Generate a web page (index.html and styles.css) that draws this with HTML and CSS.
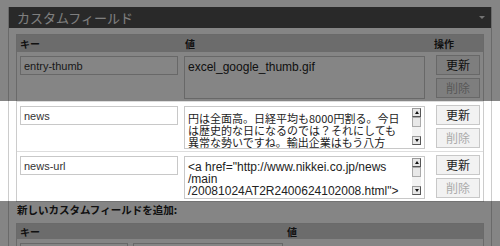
FILE: index.html
```html
<!DOCTYPE html>
<html lang="ja">
<head>
    <meta charset="UTF-8">
    <title>カスタムフィールド</title>
    <link rel="stylesheet" href="styles.css">
</head>
<body>
    <div class="postbox">
        <h3 class="hndle">
            <span>カスタムフィールド</span>
            <span class="toggle"></span>
        </h3>
        <div class="inside">
            <div class="list-table">
                <div class="list-head">
                    <div class="col-key">キー</div>
                    <div class="col-value">値</div>
                    <div class="col-action">操作</div>
                </div>

                <div class="meta-row">
                    <div class="col-key"><input type="text" class="key-input" value="entry-thumb"></div>
                    <div class="col-value">
                        <div class="value-box">
                            <textarea class="value-text" wrap="off">excel_google_thumb.gif</textarea>
                        </div>
                    </div>
                    <div class="col-action">
                        <button class="btn">更新</button>
                        <button class="btn btn-off">削除</button>
                    </div>
                </div>

                <div class="meta-row">
                    <div class="col-key"><input type="text" class="key-input" value="news"></div>
                    <div class="col-value">
                        <div class="value-box">
                            <textarea class="value-text ja" wrap="off">円は全面高。日経平均も8000円割る。今日
は歴史的な日になるのでは？それにしても
異常な勢いですね。輸出企業はもう八方</textarea>
                            <div class="scrollbar">
                                <div class="sb-arrow sb-up"></div>
                                <div class="sb-thumb"></div>
                                <div class="sb-track"></div>
                                <div class="sb-arrow sb-down"></div>
                            </div>
                        </div>
                    </div>
                    <div class="col-action">
                        <button class="btn">更新</button>
                        <button class="btn btn-off">削除</button>
                    </div>
                </div>

                <div class="meta-row">
                    <div class="col-key"><input type="text" class="key-input" value="news-url"></div>
                    <div class="col-value">
                        <div class="value-box">
                            <textarea class="value-text" wrap="off">&lt;a href="http://www.nikkei.co.jp/news
/main
/20081024AT2R2400624102008.html"&gt;</textarea>
                            <div class="scrollbar">
                                <div class="sb-arrow sb-up"></div>
                                <div class="sb-thumb"></div>
                                <div class="sb-track"></div>
                                <div class="sb-arrow sb-down"></div>
                            </div>
                        </div>
                    </div>
                    <div class="col-action">
                        <button class="btn">更新</button>
                        <button class="btn btn-off">削除</button>
                    </div>
                </div>
            </div>

            <p class="add-title">新しいカスタムフィールドを追加:</p>

            <div class="new-table">
                <div class="new-head">
                    <div>キー</div>
                    <div>値</div>
                </div>
                <div class="new-row">
                    <input type="text" class="new-key">
                    <input type="text" class="new-select">
                </div>
            </div>
        </div>
    </div>

    <!-- 強調表示の帯以外を暗くする -->
    <div class="dim dim-top"></div>
    <div class="dim dim-bottom"></div>
</body>
</html>
```

FILE: styles.css
```css
body {
    margin: 0;
    height: 246px;
    background: #fff;
    font-family: "Liberation Sans", "Noto Sans CJK JP", sans-serif;
    color: #333;
    overflow: hidden;
}

.postbox {
    margin: 7px 0 0 8px;
    width: 484px;
    height: 239px;
    box-sizing: border-box;
    border: 1px solid #ccc;
    border-top: 0;
    border-bottom: 0;
    overflow: hidden;
}

.hndle {
    margin: 0 -1px;
    height: 21px;
    background: #4f4f4f;
    color: #f4f4f4;
    font-family: "Noto Sans CJK JP", sans-serif;
    font-size: 13px;
    font-weight: normal;
    line-height: 21px;
    padding: 0 7px 0 9px;
    display: flex;
    align-items: center;
    justify-content: space-between;
}

.toggle {
    width: 0;
    height: 0;
    border-left: 3px solid transparent;
    border-right: 3px solid transparent;
    border-top: 3px solid #ddd;
}

.inside {
    padding: 6px 7px 0 7px;
}

.list-table {
    border: 1px solid #ccc;
    border-bottom: 0;
}

.list-head,
.meta-row {
    display: grid;
    grid-template-columns: 167px 249px 1fr;
}

.list-head {
    height: 17px;
    background: #d0d0d0;
    font-family: "Noto Sans CJK JP", sans-serif;
    font-size: 10px;
    font-weight: bold;
    line-height: 17px;
    color: #222;
}

.list-head .col-key {
    padding-left: 3px;
}

.list-head .col-value,
.list-head .col-action {
    padding-left: 1px;
}

.meta-row {
    height: 50px;
    box-sizing: border-box;
    padding: 4px 0 2px 0;
    border-bottom: 1px solid #ddd;
}

.meta-row .col-key {
    padding-left: 3px;
}

.key-input {
    display: block;
    margin: 0;
    width: 158px;
    height: 19px;
    box-sizing: border-box;
    border: 1px solid #c8c8c8;
    padding: 0 3px;
    font-family: "Liberation Sans", sans-serif;
    font-size: 11px;
    color: #333;
    background: #fff;
}

.value-box {
    display: flex;
    width: 241px;
    height: 43px;
    box-sizing: border-box;
    border: 1px solid #c8c8c8;
    background: #fff;
}

.value-text {
    flex: 1;
    margin: 0;
    border: 0;
    padding: 4px 0 0 3px;
    font-family: "Liberation Sans", sans-serif;
    font-size: 12px;
    line-height: 12px;
    color: #222;
    background: transparent;
    resize: none;
    overflow: hidden;
    white-space: pre;
    outline: none;
}

.value-text.ja {
    font-family: "Noto Sans CJK JP", sans-serif;
    font-size: 11px;
    padding-top: 5px;
}

.scrollbar {
    width: 9px;
    margin: 1px 3px 3px 0;
    display: flex;
    flex-direction: column;
    background: #f2f2f2;
}

.sb-arrow {
    height: 9px;
    box-sizing: border-box;
    border: 1px solid #9a9a9a;
    border-right-color: #555;
    border-bottom-color: #555;
    background: #e6e6e6;
    display: flex;
    align-items: center;
    justify-content: center;
}

.sb-arrow::before {
    content: '';
    width: 0;
    height: 0;
    border-left: 2px solid transparent;
    border-right: 2px solid transparent;
}

.sb-up::before {
    border-bottom: 3px solid #111;
}

.sb-down::before {
    border-top: 3px solid #111;
}

.sb-thumb {
    height: 10px;
    box-sizing: border-box;
    border: 1px solid #aaa;
    background: #e8e8e8;
}

.sb-track {
    flex: 1;
}

.col-action {
    display: flex;
    flex-direction: column;
    gap: 3px;
}

.meta-row .col-action {
    margin-top: -1px;
    padding-left: 3px;
}

.btn {
    width: 44px;
    height: 20px;
    margin: 0;
    padding: 0;
    border: 1px solid #c8c8c8;
    background: #f2f2f2;
    font-family: "Noto Sans CJK JP", sans-serif;
    font-size: 12px;
    line-height: 18px;
    color: #222;
}

.btn-off {
    color: #aaa;
}

.add-title {
    margin: 1px 0 0 1px;
    font-family: "Noto Sans CJK JP", sans-serif;
    font-size: 10.5px;
    font-weight: bold;
    line-height: 14px;
    color: #222;
}

.new-table {
    margin-top: 6px;
    border: 1px solid #ccc;
}

.new-head {
    display: grid;
    grid-template-columns: 270px 1fr;
    height: 15px;
    background: #d0d0d0;
    font-family: "Noto Sans CJK JP", sans-serif;
    font-size: 10px;
    font-weight: bold;
    line-height: 15px;
    color: #222;
}

.new-head div:first-child {
    padding-left: 3px;
}

.new-row {
    display: flex;
    gap: 5px;
    padding: 4px 3px 0;
    height: 8px;
    overflow: hidden;
}

.new-key {
    width: 108px;
    height: 19px;
    box-sizing: border-box;
    border: 1px solid #c8c8c8;
    margin: 0;
}

.new-select {
    width: 150px;
    height: 19px;
    box-sizing: border-box;
    border: 1px solid #c8c8c8;
    margin: 0;
}

.dim {
    position: fixed;
    left: 0;
    width: 100%;
    background: rgba(0, 0, 0, 0.48);
}

.dim-top {
    top: 0;
    height: 101px;
}

.dim-bottom {
    top: 201px;
    bottom: 0;
}
```
